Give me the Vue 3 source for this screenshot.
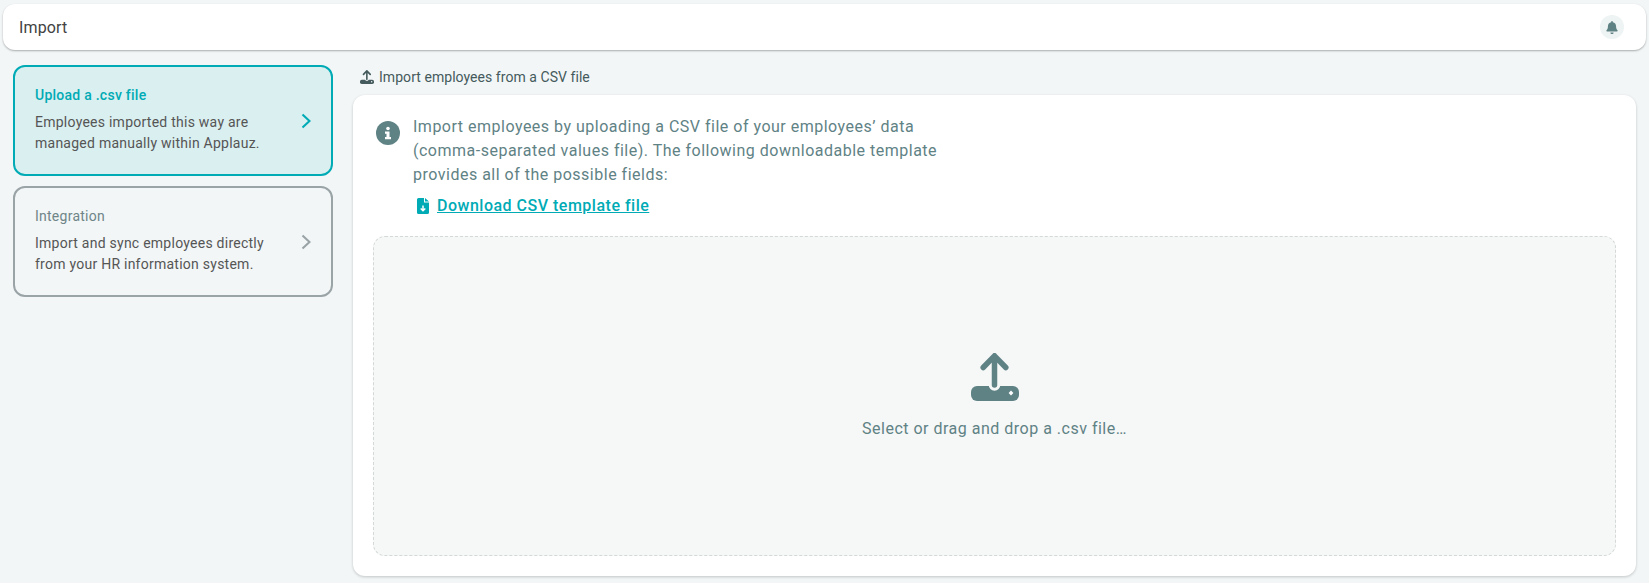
<script setup>
const cards = [
  { title: 'Upload a .csv file', text: ['Employees imported this way are', 'managed manually within Applauz.'], active: true },
  { title: 'Integration', text: ['Import and sync employees directly', 'from your HR information system.'], active: false }
]
</script>

<template>
  <div class="page">
    <header class="topbar">
      <span class="page-title">Import</span>
      <span class="bell">
        <svg viewBox="0 0 448 512" width="12" height="13"><path fill="#5f8285" d="M224 512c35 0 64-29 64-64H160c0 35 29 64 64 64zm215-150c-19-21-55-52-55-154 0-78-54-140-128-155V32a32 32 0 1 0-64 0v21C118 68 64 130 64 208c0 102-36 133-55 154-6 6-9 14-9 22 0 16 13 32 32 32h384c19 0 32-16 32-32 0-8-3-16-9-22z"/></svg>
      </span>
    </header>
    <div class="content">
      <aside class="side">
        <div v-for="c in cards" :key="c.title" class="card" :class="{ active: c.active }">
          <div class="card-body">
            <div class="card-title">{{ c.title }}</div>
            <div class="card-text">
              <div v-for="l in c.text" :key="l">{{ l }}</div>
            </div>
          </div>
          <svg class="chev" viewBox="0 0 10 16" width="10" height="16"><path d="M1.500 1.500 8.500 8l-7 6.500" fill="none" stroke="currentColor" stroke-width="2.100"/></svg>
        </div>
      </aside>
      <main class="main">
        <div class="section-head">
          <svg viewBox="0 0 48 48" width="14" height="14"><rect x="0" y="33" width="48" height="15" rx="6" fill="#455a5c"/><circle cx="23.500" cy="32" r="6" fill="#f2f6f7"/><path d="M23.500 32V4M12 15 23.500 3 35 15" stroke="#455a5c" stroke-width="5.500" fill="none" stroke-linecap="round" stroke-linejoin="round"/><circle cx="40" cy="40.500" r="2.500" fill="#f2f6f7"/></svg>
          <span>Import employees from a CSV file</span>
        </div>
        <section class="panel">
          <div class="intro">
            <svg class="info" viewBox="0 0 24 24" width="24" height="24"><circle cx="12" cy="12" r="12" fill="#5f8285"/><circle cx="12" cy="7.500" r="1.800" fill="#fff"/><path d="M9 10.500h4.500V16H15v2.200H9V16h1.500v-3.300H9z" fill="#fff"/></svg>
            <div>
              <p class="intro-text">Import employees by uploading a CSV file of your employees’ data<br>(comma-separated values file). The following downloadable template<br>provides all of the possible fields:</p>
              <div class="download">
                <svg viewBox="0 0 12 16" width="12" height="16"><path fill="#00abb5" d="M1.500 0H7v4.500h5V14.500A1.500 1.500 0 0 1 10.500 16h-9A1.500 1.500 0 0 1 0 14.500v-13A1.500 1.500 0 0 1 1.500 0zM8 0l4 3.500H8z"/><path d="M6 7.500v5M3.700 10.500 6 12.800l2.300-2.300" fill="none" stroke="#fff" stroke-width="1.500"/></svg>
                <a class="link">Download CSV template file</a>
              </div>
            </div>
          </div>
          <div class="drop">
            <svg viewBox="0 0 48 48" width="48" height="48"><rect x="0" y="33" width="48" height="15" rx="6" fill="#5f8285"/><circle cx="23.500" cy="32" r="5.800" fill="#f6f7f7"/><path d="M23.500 32V4M12.200 14.500 23.500 2.800 34.800 14.500" stroke="#5f8285" stroke-width="5.500" fill="none" stroke-linecap="round" stroke-linejoin="round"/><rect x="38.300" y="38.300" width="3.400" height="3.400" transform="rotate(45 40 40)" fill="#fff"/></svg>
            <div class="drop-text">Select or drag and drop a .csv file…</div>
          </div>
        </section>
      </main>
    </div>
  </div>
</template>

<style>
html, body { margin: 0; background: #f2f6f7; }
</style>

<style scoped>
.page {
  width: 1649px;
  height: 583px;
  box-sizing: border-box;
  padding: 4px 3px 0;
  font-family: Roboto, "Liberation Sans", sans-serif;
  background: #f2f6f7;
  overflow: hidden;
}
.topbar {
  height: 46px;
  box-sizing: border-box;
  background: #fff;
  border-radius: 12px;
  box-shadow: 0 1px 2px rgba(0, 0, 0, 0.3);
  display: flex;
  align-items: center;
  justify-content: space-between;
  padding: 0 22px 0 16px;
  color: #424242;
}
.page-title { font-size: 16px; letter-spacing: 0.15px; }
.bell {
  width: 24px;
  height: 24px;
  border-radius: 50%;
  background: #eef3f3;
  display: flex;
  align-items: center;
  justify-content: center;
}
.content {
  display: flex;
  margin-top: 15px;
  padding-left: 10px;
}
.side {
  width: 320px;
  flex: none;
  display: flex;
  flex-direction: column;
  gap: 10px;
}
.card {
  height: 111px;
  box-sizing: border-box;
  border: 2px solid #9aa3a6;
  border-radius: 12px;
  padding: 0 20px 3px;
  display: flex;
  align-items: center;
  justify-content: space-between;
  color: #9aa3a6;
}
.chev { margin-top: 3px; }
.card.active {
  border-color: #00abb5;
  background: #daeff0;
  color: #00abb5;
}
.card-title {
  font-size: 14px;
  line-height: 21px;
  letter-spacing: 0.25px;
  color: #6f8587;
  margin-bottom: 6px;
}
.active .card-title { color: #00abb5; font-weight: 500; }
.card-text {
  font-size: 14px;
  line-height: 21px;
  letter-spacing: 0.25px;
  color: #555;
}
.main {
  margin-left: 20px;
  width: 1283px;
}
.section-head {
  height: 24px;
  display: flex;
  align-items: center;
  gap: 5px;
  padding-left: 7px;
  font-size: 14px;
  letter-spacing: 0.05px;
  color: #455a5c;
  margin-bottom: 6px;
}
.panel {
  height: 481px;
  box-sizing: border-box;
  background: #fff;
  border-radius: 12px;
  box-shadow: 0 1px 3px rgba(0, 0, 0, 0.2);
  padding: 20px;
  display: flex;
  flex-direction: column;
}
.intro {
  display: flex;
  gap: 13px;
  padding-left: 3px;
  height: 121px;
  flex: none;
}
.info { margin-top: 6px; flex: none; }
.intro-text {
  margin: 0;
  font-size: 16px;
  line-height: 24px;
  letter-spacing: 0.5px;
  color: #5f8285;
}
.download {
  display: flex;
  align-items: center;
  gap: 8px;
  margin: 7px 0 0 4px;
}
.link {
  font-size: 16px;
  font-weight: 500;
  letter-spacing: 0.5px;
  line-height: 24px;
  color: #00abb5;
  text-decoration: underline;
}
.drop {
  flex: 1;
  border: 1px dashed #d3d8d8;
  border-radius: 12px;
  background: #f6f7f7;
  display: flex;
  flex-direction: column;
  align-items: center;
  justify-content: center;
  gap: 16px;
  padding-top: 2px;
}
.drop-text {
  font-size: 16px;
  line-height: 24px;
  letter-spacing: 0.5px;
  color: #5f8285;
}
</style>
